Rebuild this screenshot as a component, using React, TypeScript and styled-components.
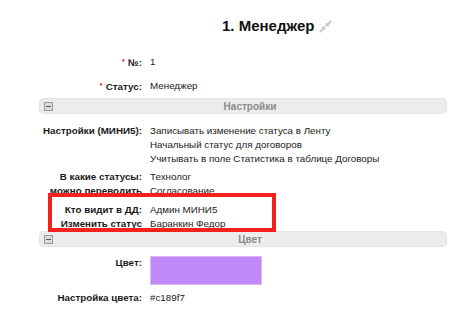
import React from 'react'
import styled, { createGlobalStyle } from 'styled-components'

const GlobalStyle = createGlobalStyle`
  body {
    margin: 0;
    background: #fff;
    font-family: "Liberation Sans", Arial, sans-serif;
    font-size: 9.8px;
    color: #1a1a1a;
  }
`

const Page = styled.div`
  position: relative;
  width: 473px;
  height: 326px;
  overflow: hidden;
  padding-top: 15px;
  box-sizing: border-box;
`

const Header = styled.div`
  display: flex;
  align-items: center;
  gap: 5px;
  padding-left: 222px;
  height: 22px;
`

const Title = styled.h1`
  margin: 0;
  font-size: 15px;
  font-weight: bold;
  line-height: 22px;
  color: #111;
`

const Form = styled.div`
  width: 408px;
  margin-left: 39px;
`

const Row = styled.div<{ $top: number }>`
  display: grid;
  grid-template-columns: 103px 1fr;
  column-gap: 8px;
  margin-top: ${p => p.$top}px;
  line-height: 14px;
`

const Label = styled.div`
  text-align: right;
  font-weight: bold;
  white-space: nowrap;
`

const Required = styled.span`
  color: #e0231c;
  font-size: 8px;
  vertical-align: 2px;
  margin-right: 3px;
`

const Values = styled.div`
  display: flex;
  flex-direction: column;
`

const SectionBar = styled.div<{ $top: number }>`
  display: flex;
  align-items: center;
  height: 16px;
  margin-top: ${p => p.$top}px;
  padding-left: 5px;
  background: #ececec;
  border-radius: 5px;
  box-shadow: inset 0 0 0 1px #e4e4e4;
`

const Toggle = styled.span`
  position: relative;
  width: 9px;
  height: 9px;
  box-sizing: border-box;
  border: 1px solid #9a9a9a;
  background: #dcdcdc;
  &::after {
    content: '';
    position: absolute;
    left: 1px;
    right: 1px;
    top: 3px;
    height: 1px;
    background: #555;
  }
`

const SectionTitle = styled.div`
  flex: 1;
  text-align: center;
  font-weight: bold;
  color: #8a8a8a;
  font-size: 10px;
`

const Swatch = styled.div<{ $color: string }>`
  width: 112px;
  height: 29px;
  box-sizing: border-box;
  background: ${p => p.$color};
  border: 1px solid #dcb8fb;
`

const Highlight = styled.div`
  position: absolute;
  left: 48px;
  top: 193px;
  width: 228px;
  height: 39px;
  box-sizing: border-box;
  border: 4px solid #f5221b;
  pointer-events: none;
`

const CollapseIcon = () => (
  <svg width="13" height="13" viewBox="0 0 13 13">
    <g stroke="#c8c8c8" strokeWidth="2" strokeLinecap="round">
      <path d="M11.5 1.5 L8.5 4.5" />
      <path d="M1.5 11.5 L4.5 8.5" />
    </g>
    <g fill="#c8c8c8">
      <path d="M6.6 2.4 L6.6 6.4 L10.6 6.4 Z" />
      <path d="M6.4 10.6 L6.4 6.6 L2.4 6.6 Z" />
    </g>
  </svg>
)

const settings = [
  'Записывать изменение статуса в Ленту',
  'Начальный статус для договоров',
  'Учитывать в поле Статистика в таблице Договоры'
]

const color = '#c189f7'

export default function App() {
  return (
    <Page>
      <GlobalStyle />
      <Header>
        <Title>1. Менеджер</Title>
        <CollapseIcon />
      </Header>
      <Form>
        <Row $top={18}>
          <Label><Required>*</Required>№:</Label>
          <div>1</div>
        </Row>
        <Row $top={9}>
          <Label><Required>*</Required>Статус:</Label>
          <div>Менеджер</div>
        </Row>
        <SectionBar $top={4}>
          <Toggle />
          <SectionTitle>Настройки</SectionTitle>
        </SectionBar>
        <Row $top={10}>
          <Label>Настройки (МИНИ5):</Label>
          <Values>
            {settings.map(s => <div key={s}>{s}</div>)}
          </Values>
        </Row>
        <Row $top={4}>
          <Label>В какие статусы:<br />можно переводить</Label>
          <Values>
            <div>Технолог</div>
            <div>Согласование</div>
          </Values>
        </Row>
        <Row $top={5}>
          <Label>Кто видит в ДД:<br />Изменить статус</Label>
          <Values>
            <div>Админ МИНИ5</div>
            <div>Баранкин Федор</div>
          </Values>
        </Row>
        <SectionBar $top={0}>
          <Toggle />
          <SectionTitle>Цвет</SectionTitle>
        </SectionBar>
        <Row $top={9}>
          <Label>Цвет:</Label>
          <Swatch $color={color} />
        </Row>
        <Row $top={6}>
          <Label>Настройка цвета:</Label>
          <div>{color}</div>
        </Row>
      </Form>
      <Highlight />
    </Page>
  )
}
